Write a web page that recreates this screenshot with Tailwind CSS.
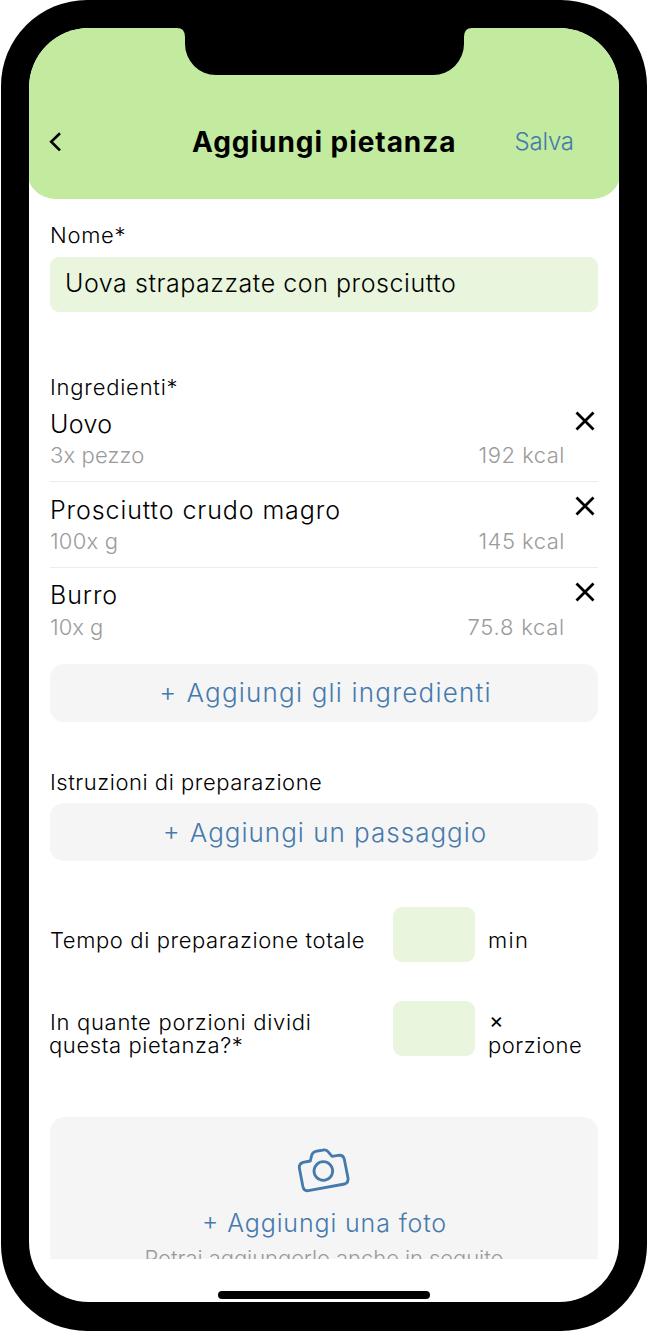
<!DOCTYPE html>
<html lang="it">
<head>
  <meta charset="UTF-8">
  <meta name="viewport" content="width=device-width, initial-scale=1.0">
  <title>Aggiungi pietanza</title>
  <script src="https://cdn.jsdelivr.net/npm/@tailwindcss/browser@4"></script>
</head>
<body class="bg-white font-['Inter',sans-serif] font-light text-black">

  <!-- Phone frame -->
  <div class="relative ml-px h-[1331px] w-[646px] overflow-hidden rounded-[86px] bg-black px-[28px] pt-[28px] pb-[29px]">

    <!-- Screen -->
    <div class="flex h-[1274px] w-[590px] flex-col overflow-hidden rounded-[60px] bg-white">

      <!-- Header -->
      <header class="-mx-0.5 h-[171px] shrink-0 rounded-b-[28px] bg-[#c3eb9f] pt-[92px]">
        <div class="grid h-11 grid-cols-[163px_1fr_166px] items-center">
          <button class="pl-[20px]" aria-label="Indietro">
            <svg class="-mt-0.5 h-5 w-4" viewBox="0 0 16 20" fill="none" stroke="black" stroke-width="2.6"><path d="M13 2.2 4.2 10.8 13 19.4"/></svg>
          </button>
          <h1 class="pl-[2px] text-[28px] font-bold tracking-[0.95px] whitespace-nowrap">Aggiungi pietanza</h1>
          <a href="#" class="pl-[58px] text-[24px] tracking-[-0.2px] text-[#457aad]">Salva</a>
        </div>
      </header>

      <!-- Form -->
      <main class="h-[1060px] overflow-hidden px-[21px] pt-6">
        <label class="block text-[22px] leading-6 tracking-[0.7px]">Nome*</label>
        <div class="mt-[10px] flex h-[55px] items-center rounded-[9px] bg-[#e9f5dd] pb-px pl-[15px] text-[25px] tracking-[0.55px]">Uova strapazzate con prosciutto</div>

        <!-- Ingredients -->
        <label class="mt-[63px] block text-[22px] leading-6 tracking-[0.78px]">Ingredienti*</label>
        <ul>
          <li class="flex border-b border-[#ececec] pt-[10px] pb-[10px]">
            <div class="flex-1">
              <p class="text-[25px] leading-[30px] tracking-[0.4px]">Uovo</p>
              <p class="mt-px mb-px flex justify-between text-[22px] leading-[30px] text-[#9b9b9b]"><span class="tracking-[0.12px]">3x pezzo</span><span class="tracking-[0.5px]">192 kcal</span></p>
            </div>
            <svg class="mt-[2px] mr-[3px] ml-[10px] size-5" viewBox="0 0 20 20" stroke="black" stroke-width="2.8"><path d="m1.5 1.5 17 17m0-17-17 17"/></svg>
          </li>
          <li class="flex border-b border-[#ececec] pt-[13px] pb-[10px]">
            <div class="flex-1">
              <p class="text-[25px] leading-[30px] tracking-[0.9px]">Prosciutto crudo magro</p>
              <p class="mt-px mb-px flex justify-between text-[22px] leading-[30px] text-[#9b9b9b]"><span class="tracking-[0.2px]">100x g</span><span class="tracking-[0.5px]">145 kcal</span></p>
            </div>
            <svg class="mt-px mr-[3px] ml-[10px] size-5" viewBox="0 0 20 20" stroke="black" stroke-width="2.8"><path d="m1.5 1.5 17 17m0-17-17 17"/></svg>
          </li>
          <li class="flex pt-[12px]">
            <div class="flex-1">
              <p class="text-[25px] leading-[30px] tracking-[0.9px]">Burro</p>
              <p class="mt-[2px] flex justify-between text-[22px] leading-[30px] text-[#9b9b9b]"><span>10x g</span><span class="tracking-[0.75px]">75.8 kcal</span></p>
            </div>
            <svg class="mt-[2px] mr-[3px] ml-[10px] size-5" viewBox="0 0 20 20" stroke="black" stroke-width="2.8"><path d="m1.5 1.5 17 17m0-17-17 17"/></svg>
          </li>
        </ul>
        <button class="mt-[22px] flex h-[58px] w-full items-center justify-center rounded-[14px] bg-[#f5f5f5] pb-px pl-[3px] text-[26px] tracking-[1.2px] text-[#457aad]"><span class="mr-[9px] -mt-[3px]">+</span>Aggiungi gli ingredienti</button>

        <!-- Steps -->
        <label class="mt-[48px] block text-[22px] leading-6 tracking-[0.54px]">Istruzioni di preparazione</label>
        <button class="mt-[9px] flex h-[58px] w-full items-center justify-center rounded-[14px] bg-[#f5f5f5] pl-[2px] text-[26px] tracking-[1px] text-[#457aad]"><span class="mr-[9px] -mt-[3px]">+</span>Aggiungi un passaggio</button>

        <!-- Time and portions -->
        <div class="mt-[46px] grid grid-cols-[343px_82px_1fr] text-[22px] leading-[23px]">
          <p class="pt-[22px] tracking-[0.6px]">Tempo di preparazione totale</p>
          <div class="h-[55px] rounded-[9px] bg-[#e9f5dd]"></div>
          <p class="pt-[22px] pl-[13px] tracking-[1.3px]">min</p>
        </div>
        <div class="mt-[39px] grid grid-cols-[343px_82px_1fr] text-[22px] leading-[23px]">
          <div class="pt-[10px]">
            <p class="tracking-[0.7px]">In quante porzioni dividi</p>
            <p class="-ml-px tracking-[0.6px]">questa pietanza?*</p>
          </div>
          <div class="h-[55px] rounded-[9px] bg-[#e9f5dd]"></div>
          <div class="pt-[10px] pl-[13px] tracking-[0.54px]">
            <p class="-mt-[2px] mb-[2px] pl-px font-normal">×</p>
            <p>porzione</p>
          </div>
        </div>

        <!-- Photo -->
        <div class="mt-[60px] flex flex-col items-center rounded-t-[15px] bg-[#f5f5f5] pt-[30px]">
          <svg class="mr-px h-[47px] w-[54px]" viewBox="500 112 162 141" fill="none" stroke="#457aad" stroke-width="8.5" stroke-linejoin="round">
            <path d="M540 154 544 137Q547 127 556 125L578 121Q587 119 593 126L605 140 624 137Q639 135 642 149L653 205Q655 219 643 223L534 243Q521 245 518 232L507 175Q506 162 518 158Z"/>
            <circle cx="579" cy="184" r="28"/>
          </svg>
          <p class="mt-[14px] flex pl-px text-[25px] leading-[30px] tracking-[0.86px] text-[#457aad]"><span class="-mt-[2px] mr-[8px]">+</span>Aggiungi una foto</p>
          <p class="mt-[5px] text-[22px] leading-[30px] tracking-[-0.06px] text-[#9b9b9b]">Potrai aggiungerlo anche in seguito</p>
        </div>
      </main>

      <!-- Home indicator -->
      <div class="mx-auto mt-[32px] mb-[3px] h-2 w-[212px] shrink-0 rounded-full bg-black"></div>
    </div>

    <!-- Notch -->
    <svg class="absolute top-[28px] left-[175.5px] h-[47px] w-[295px]" viewBox="0 0 295 47"><path d="M0 0Q8 0 8 9V16A31 31 0 0 0 39 47H256A31 31 0 0 0 287 16V9Q287 0 295 0Z"/></svg>
  </div>

</body>
</html>
